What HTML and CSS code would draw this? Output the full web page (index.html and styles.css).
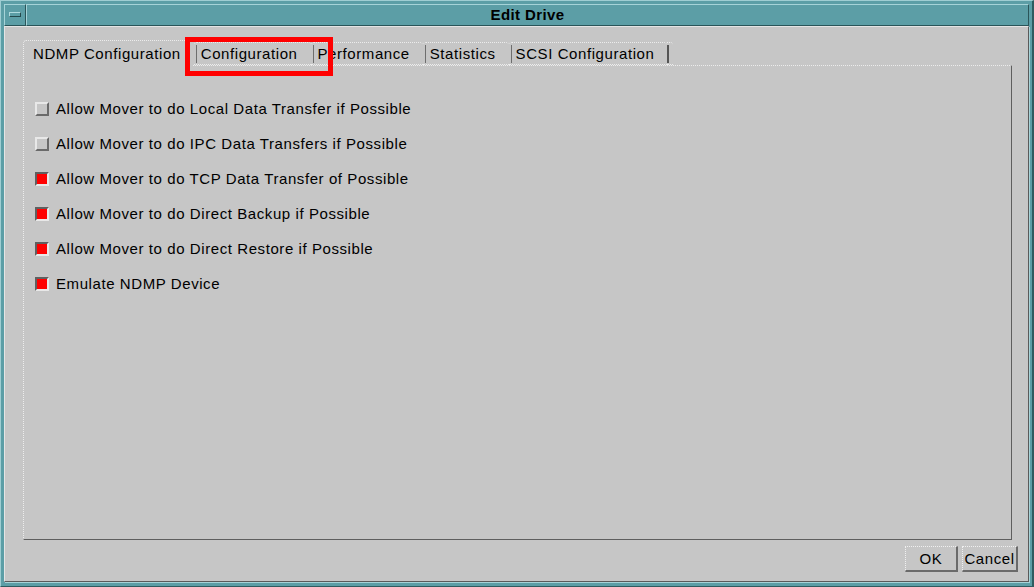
FILE: index.html
```html
<!DOCTYPE html>
<html>
<head>
<meta charset="utf-8">
<link rel="stylesheet" href="styles.css">
</head>
<body>
<div class="frame">
  <div class="titlebar">
    <div class="menubtn"><span class="menuicon"></span></div>
    <div class="title">Edit Drive</div>
  </div>
  <div class="client">
    <div class="tabs">
      <div class="tab active">NDMP Configuration</div>
      <div class="tab"><span class="sep"></span>Configuration</div>
      <div class="tab"><span class="sep"></span>Performance</div>
      <div class="tab"><span class="sep"></span>Statistics</div>
      <div class="tab"><span class="sep"></span>SCSI Configuration</div>
      <div class="tabend"><span class="sep thick"></span></div>
      <div class="tabfill"></div>
    </div>
    <div class="panel">
      <div class="opt"><span class="box"></span>Allow Mover to do Local Data Transfer if Possible</div>
      <div class="opt"><span class="box"></span>Allow Mover to do IPC Data Transfers if Possible</div>
      <div class="opt"><span class="box on"></span>Allow Mover to do TCP Data Transfer of Possible</div>
      <div class="opt"><span class="box on"></span>Allow Mover to do Direct Backup if Possible</div>
      <div class="opt"><span class="box on"></span>Allow Mover to do Direct Restore if Possible</div>
      <div class="opt"><span class="box on"></span>Emulate NDMP Device</div>
    </div>
    <div class="buttons">
      <div class="btn ok">OK</div>
      <div class="btn cancel">Cancel</div>
    </div>
  </div>
</div>
<div class="annot"></div>
</body>
</html>
```

FILE: styles.css
```css
html, body {
  margin: 0;
  padding: 0;
  width: 1034px;
  height: 587px;
  overflow: hidden;
  background: #5c9ea6;
  font-family: "Liberation Sans", Arial, Helvetica, sans-serif;
  font-size: 15px;
  letter-spacing: 0.58px;
  color: #000;
}

.frame {
  box-sizing: border-box;
  width: 1034px;
  height: 587px;
  background: #5c9ea6;
  border-left: 1px solid #9fcdd2;
  border-top: 1px solid #9fcdd2;
  border-right: 2px solid #2e5c60;
  border-bottom: 1px solid #2e5c60;
  padding: 3px 3px 4px 3px;
  display: flex;
  flex-direction: column;
}

.titlebar {
  height: 22px;
  display: flex;
  flex: none;
}

.menubtn {
  box-sizing: border-box;
  width: 22px;
  height: 22px;
  border-top: 1px solid #a6d3d8;
  border-left: 1px solid #a6d3d8;
  border-right: 1px solid #2a5559;
  border-bottom: 1px solid #2a5559;
  display: flex;
  align-items: center;
  justify-content: center;
}

.menuicon {
  box-sizing: border-box;
  width: 12px;
  height: 5px;
  margin-top: -1px;
  border-top: 1px solid #b0dade;
  border-left: 1px solid #b0dade;
  border-right: 1px solid #24494c;
  border-bottom: 1px solid #24494c;
}

.title {
  flex: 1;
  box-sizing: border-box;
  height: 22px;
  border-top: 1px solid #a6d3d8;
  border-left: 1px solid #a6d3d8;
  border-right: 1px solid #2a5559;
  border-bottom: 1px solid #2a5559;
  font-weight: bold;
  font-size: 15px;
  line-height: 20px;
  text-align: center;
  letter-spacing: 0.4px;
}

.client {
  flex: 1;
  background: #c6c6c6;
  border-top: 1px solid #e4e4e4;
  border-left: 1px solid #e4e4e4;
  border-right: 1px solid #5a5a5a;
  border-bottom: 1px solid #5a5a5a;
  box-shadow: 1px 1px 0 #a6d3d8;
  padding: 13px 10px 9px 18px;
  display: flex;
  flex-direction: column;
}

.tabs {
  height: 25px;
  display: flex;
  align-items: flex-end;
  margin-right: 6px;
  flex: none;
}

.tab {
  box-sizing: border-box;
  height: 23px;
  display: flex;
  align-items: center;
  border-top: 1px dotted #ececec;
  border-top-left-radius: 3px;
  border-top-right-radius: 3px;
  border-bottom: 1px dotted #ececec;
  padding-right: 13px;
  white-space: nowrap;
  line-height: 18px;
  padding-top: 1px;
}

.tab.active {
  height: 26px;
  margin-bottom: -1px;
  border-left: 1px dotted #ececec;
  border-bottom: none;
  border-top-right-radius: 0;
  padding-left: 9px;
  padding-right: 12px;
  padding-top: 0;
  position: relative;
  background: #c6c6c6;
  z-index: 1;
  margin-right: 1px;
}

.sep {
  width: 1px;
  height: 18px;
  background: #6e6e6e;
  margin-left: 2px;
  margin-right: 4px;
  flex: none;
}

.sep.thick {
  width: 2px;
  background: #555;
  margin-left: 0;
}

.tabend {
  box-sizing: border-box;
  height: 23px;
  display: flex;
  align-items: center;
  border-top: 1px dotted #ececec;
  border-top-right-radius: 3px;
  border-bottom: 1px dotted #ececec;
  padding-top: 1px;
}

.tabfill {
  flex: 1;
  height: 0;
}

.panel {
  flex: 1;
  border-top: 1px dotted #ececec;
  border-left: 1px dotted #ececec;
  border-right: 1px solid #5e5e5e;
  border-bottom: 1px solid #5e5e5e;
  margin-right: 6px;
  padding: 25px 0 0 11px;
  display: flex;
  flex-direction: column;
}

.opt {
  height: 35px;
  display: flex;
  align-items: center;
  white-space: nowrap;
}

.box {
  box-sizing: border-box;
  width: 14px;
  height: 14px;
  margin-right: 7px;
  background: #c6c6c6;
  border-top: 2px solid #e8e8e8;
  border-left: 2px solid #e8e8e8;
  border-right: 2px solid #6a6a6a;
  border-bottom: 2px solid #6a6a6a;
  flex: none;
}

.box.on {
  background: #ff0000;
  border-top-color: #606060;
  border-left-color: #606060;
  border-right-color: #e8e8e8;
  border-bottom-color: #e8e8e8;
}

.buttons {
  display: flex;
  justify-content: flex-end;
  gap: 4px;
  margin-top: 6px;
  flex: none;
}

.btn {
  box-sizing: border-box;
  height: 26px;
  display: flex;
  align-items: center;
  justify-content: center;
  border-top: 1px dotted #f0f0f0;
  border-left: 1px dotted #f0f0f0;
  border-right: 2px solid #6a6a6a;
  border-bottom: 2px solid #6a6a6a;
  font-size: 15px;
}

.btn.ok {
  width: 53px;
}

.btn.cancel {
  width: 56px;
}

.annot {
  position: absolute;
  z-index: 10;
  left: 185px;
  top: 37px;
  width: 148px;
  height: 39px;
  box-sizing: border-box;
  border: 5px solid #ff0000;
}
```
